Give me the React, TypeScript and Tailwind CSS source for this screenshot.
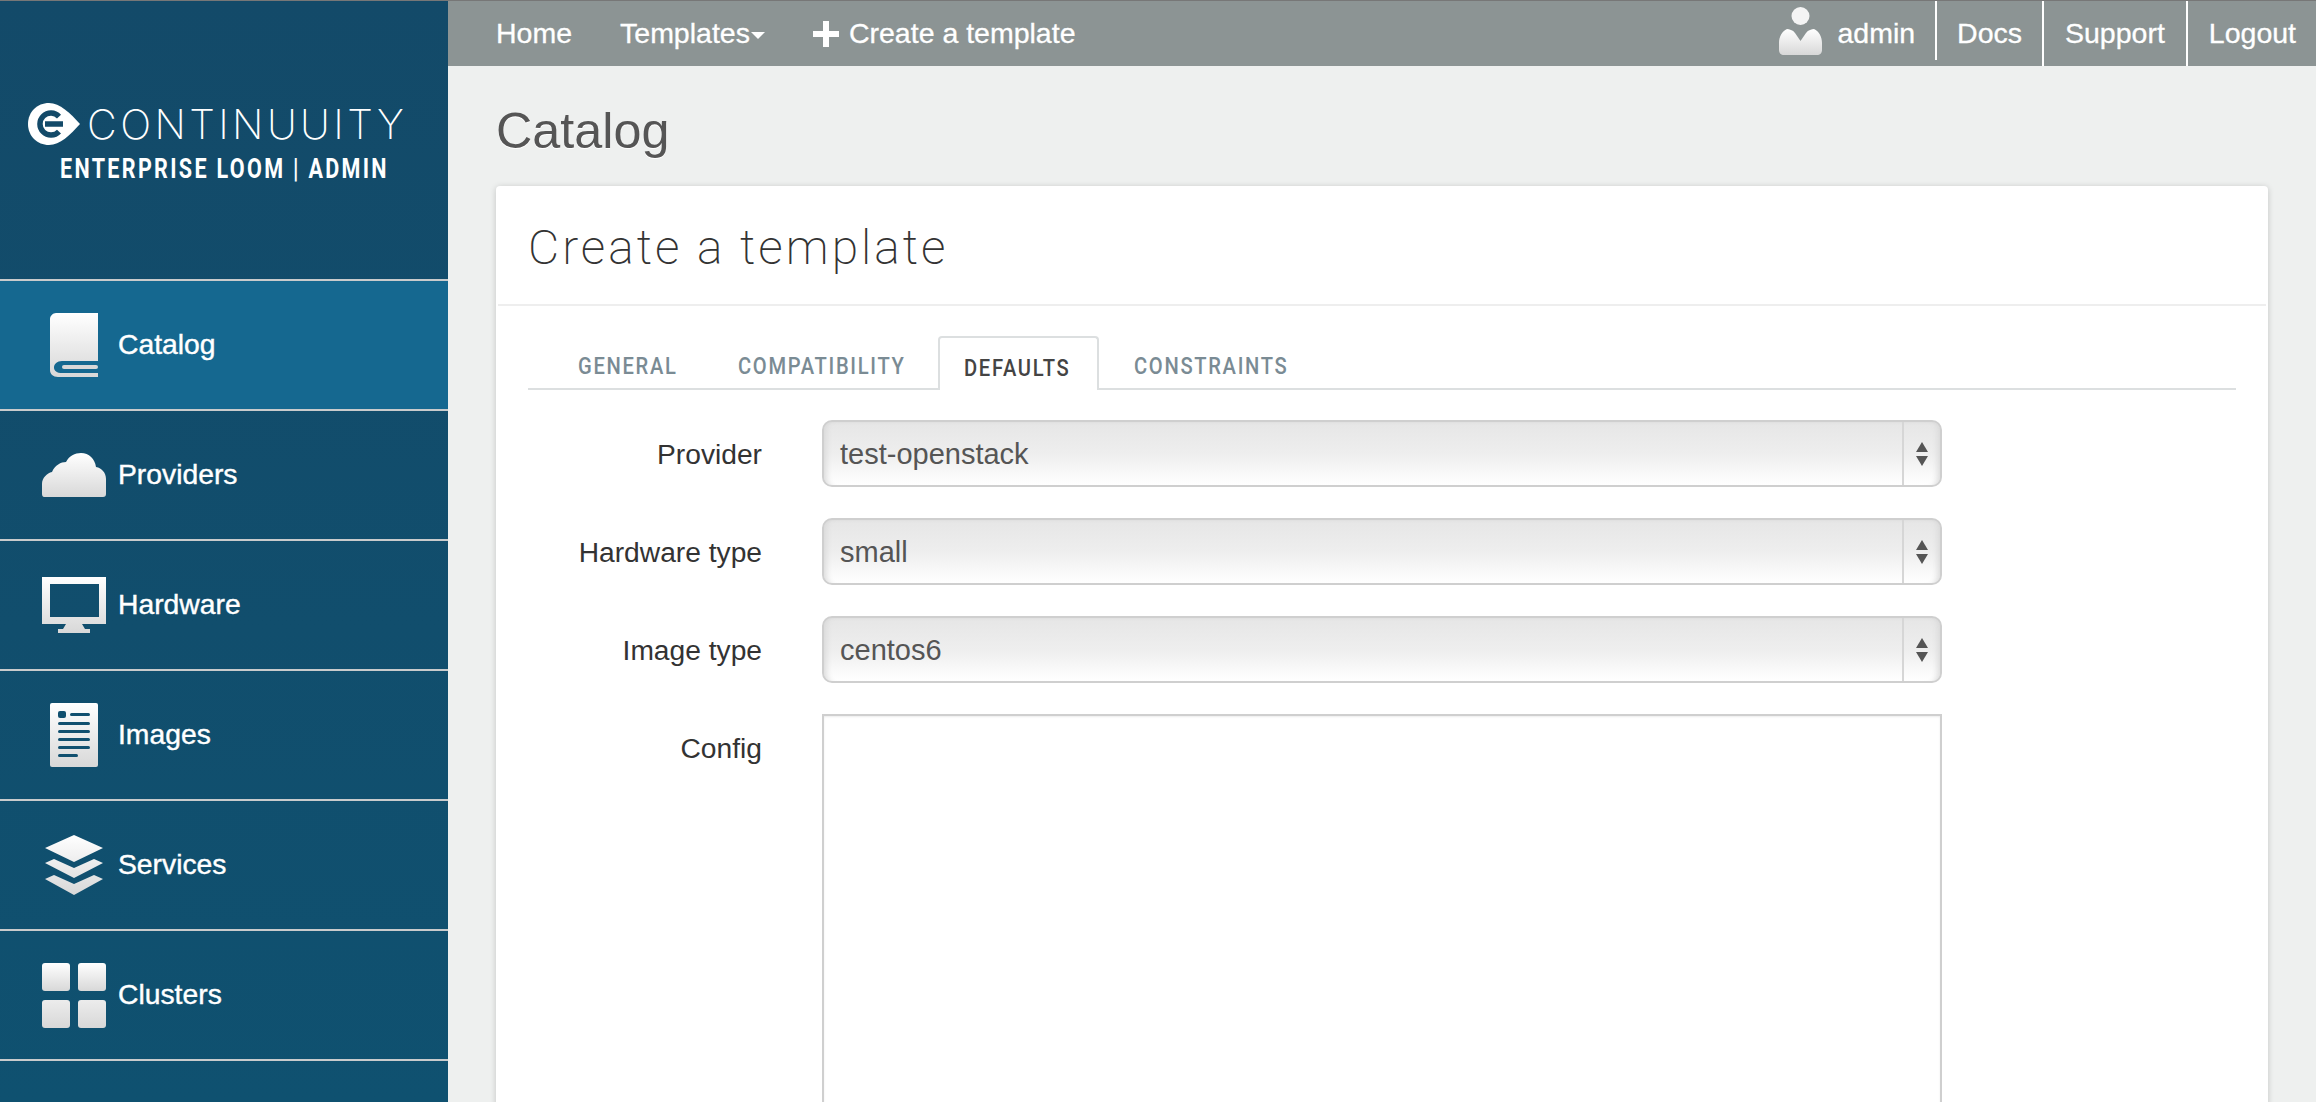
import type { ReactNode } from 'react';

const sans = 'font-["Liberation_Sans",Arial,sans-serif]';

function Grad({ id }: { id: string }) {
  return (
    <defs>
      <linearGradient id={id} x1="0" y1="0" x2="0" y2="1">
        <stop offset="0" stopColor="#ffffff" />
        <stop offset="1" stopColor="#d8d8d8" />
      </linearGradient>
    </defs>
  );
}

function BookIcon() {
  return (
    <svg width="48" height="64" viewBox="0 0 48 64">
      <Grad id="g-book" />
      <path
        d="M6 0H48V48H12C7 48 4 51 4 54.500C4 58 7 60 12 60H48V64H8C3 64 0 61 0 57V6C0 3 3 0 6 0Z"
        fill="url(#g-book)"
      />
      <rect x="12" y="52" width="36" height="4" rx="2" fill="#d8d8d8" />
    </svg>
  );
}

function CloudIcon() {
  return (
    <svg width="64" height="44" viewBox="0 0 64 44">
      <Grad id="g-cloud" />
      <path
        d="M2 44C1 44 0 43 0 41V31C0 25 5 20 10 19C13 12 19 9 24 9C27 3 33 0 39 0C47 0 53 6 54 14C60 15 64 20 64 26V41C64 43 63 44 61 44Z"
        fill="url(#g-cloud)"
      />
    </svg>
  );
}

function MonitorIcon() {
  return (
    <svg width="64" height="56" viewBox="0 0 64 56">
      <Grad id="g-mon" />
      <path
        fillRule="evenodd"
        d="M0 0H64V47H40L43 52H48V56H16V52H21L24 47H0ZM8 7V40H57V7Z"
        fill="url(#g-mon)"
      />
    </svg>
  );
}

function DocIcon() {
  return (
    <svg width="48" height="64" viewBox="0 0 48 64">
      <Grad id="g-doc" />
      <rect width="48" height="64" rx="2" fill="url(#g-doc)" />
      <g fill="#11506f">
        <rect x="8" y="8" width="8" height="7" rx="2" />
        <rect x="20" y="10" width="20" height="3" rx="1.500" />
        <rect x="8" y="19" width="32" height="3" rx="1.500" />
        <rect x="8" y="27" width="32" height="3" rx="1.500" />
        <rect x="8" y="35" width="32" height="3" rx="1.500" />
        <rect x="8" y="43" width="32" height="3" rx="1.500" />
        <rect x="8" y="51" width="20" height="3" rx="1.500" />
      </g>
    </svg>
  );
}

function LayersIcon() {
  return (
    <svg width="58" height="60" viewBox="0 0 58 60">
      <Grad id="g-lay" />
      <path
        d="M29 0L58 13L29 27L0 13ZM9 24L29 33L49 24L58 28L29 43L0 28ZM9 40L29 49L49 40L58 44L29 60L0 44Z"
        fill="url(#g-lay)"
      />
    </svg>
  );
}

function GridIcon() {
  return (
    <svg width="64" height="65" viewBox="0 0 64 65">
      <Grad id="g-grid-top" />
      <defs>
        <linearGradient id="g-grid-bottom" x1="0" y1="0" x2="0" y2="1">
          <stop offset="0" stopColor="#ececec" />
          <stop offset="1" stopColor="#d8d8d8" />
        </linearGradient>
      </defs>
      <rect x="0" y="0" width="28" height="28" rx="3" fill="url(#g-grid-top)" />
      <rect x="36" y="0" width="28" height="28" rx="3" fill="url(#g-grid-top)" />
      <rect x="0" y="37" width="28" height="28" rx="3" fill="url(#g-grid-bottom)" />
      <rect x="36" y="37" width="28" height="28" rx="3" fill="url(#g-grid-bottom)" />
    </svg>
  );
}

function UserIcon() {
  return (
    <svg width="43" height="48" viewBox="0 0 43 48">
      <Grad id="g-user" />
      <ellipse cx="21.500" cy="9" rx="9" ry="9" fill="#f4f4f4" />
      <path
        d="M8 22C10 22 14 23 16 26L21.500 34L27 26C29 23 33 22 35 22C40 24 43 30 43 36V43C43 46 41 48 38 48H5C2 48 0 46 0 43V36C0 30 3 24 8 22Z"
        fill="url(#g-user)"
      />
    </svg>
  );
}

function Logo() {
  return (
    <svg width="52" height="42" viewBox="0 0 52 42" className="shrink-0">
      <path d="M21 0C32 0 42 10 52 21C42 32 32 42 21 42C9 42 0 33 0 21C0 9 9 0 21 0Z" fill="#fff" />
      <path
        d="M31 13.500A11 11 0 1 0 31 28.500M17 21H35"
        fill="none"
        stroke="#134a69"
        strokeWidth="5.500"
      />
    </svg>
  );
}

const sideItems: { label: string; icon: ReactNode; active?: boolean }[] = [
  { label: 'Catalog', icon: <BookIcon />, active: true },
  { label: 'Providers', icon: <CloudIcon /> },
  { label: 'Hardware', icon: <MonitorIcon /> },
  { label: 'Images', icon: <DocIcon /> },
  { label: 'Services', icon: <LayersIcon /> },
  { label: 'Clusters', icon: <GridIcon /> },
];

function Sidebar() {
  return (
    <aside className="flex w-[448px] shrink-0 flex-col bg-gradient-to-b from-[#134a69] to-[#0f5170]">
      <div className="flex h-[278px] flex-col pl-[28px] pt-[102px]">
        <div className="flex h-[42px] items-center gap-[7px]">
          <Logo />
          <span className='font-["Inter",sans-serif] text-[41px] font-extralight leading-none tracking-[3.4px] text-white'>
            CONTINUUITY
          </span>
        </div>
        <div className='ml-[32px] mt-[9px] origin-left scale-x-[0.77] whitespace-nowrap font-["Roboto",sans-serif] text-[28px] font-bold leading-[30px] tracking-[3px] text-white'>
          ENTERPRISE LOOM | ADMIN
        </div>
      </div>
      <nav className="border-t-2 border-[#c9cbcc]">
        {sideItems.map((item) => (
          <div
            key={item.label}
            className={`flex h-[130px] items-center border-b-2 border-[#c9cbcc] ${item.active ? 'bg-[#156890]' : ''}`}
          >
            <div className="flex w-[118px] shrink-0 justify-center pl-[40px] pr-[10px]">{item.icon}</div>
            <span className={`${sans} pb-[2px] text-[28.300px] text-white [-webkit-text-stroke:0.4px_white]`}>{item.label}</span>
          </div>
        ))}
      </nav>
    </aside>
  );
}

function TopNav() {
  return (
    <header className={`${sans} flex h-[65px] shrink-0 items-center justify-between bg-[#8c9494] pl-[24px] text-[28.500px] text-white [-webkit-text-stroke:0.3px_white]`}>
      <div className="flex items-center">
        <a className="px-[24px]">Home</a>
        <a className="flex items-center px-[24px]">
          Templates
          <span className="ml-[1px] mt-[4px] h-0 w-0 border-x-[7px] border-t-[7px] border-x-transparent border-t-white" />
        </a>
        <a className="flex items-center gap-[10px] px-[24px]">
          <svg width="26" height="26" viewBox="0 0 26 26">
            <path d="M10 0H16V10H26V16H16V26H10V16H0V10H10Z" fill="#fff" />
          </svg>
          Create a template
        </a>
      </div>
      <div className="flex h-full items-start">
        <div className="flex h-[59px] items-center gap-[15px] border-r-2 border-white pr-[20px]">
          <UserIcon />
          <span className="mt-[6px]">admin</span>
        </div>
        <a className="flex h-full items-center border-r-2 border-white px-[20px]">Docs</a>
        <a className="flex h-full items-center border-r-2 border-white px-[21px]">Support</a>
        <a className="flex h-full items-center pl-[21px] pr-[20px]">Logout</a>
      </div>
    </header>
  );
}

const tabs = [
  { label: 'GENERAL', w: 'w-[160px]', pl: 'pl-[50px]' },
  { label: 'COMPATIBILITY', w: 'w-[250px]', pl: 'pl-[50px]' },
];

function Tabs() {
  const tabText = 'mt-[8px] origin-left scale-x-[0.84] whitespace-nowrap font-["Roboto",sans-serif] text-[24px] font-medium tracking-[2px]';
  return (
    <div className="flex h-[54px] border-b-2 border-[#dcdfe0]">
      {tabs.map((t) => (
        <div key={t.label} className={`flex items-center ${t.w} ${t.pl} text-[#7a8b94]`}>
          <span className={tabText}>{t.label}</span>
        </div>
      ))}
      <div className="-mb-[2px] flex h-[54px] w-[161px] items-center rounded-t-[4px] border-2 border-b-0 border-[#dcdfe0] bg-white pl-[24px] text-[#444]">
        <span className={tabText}>DEFAULTS</span>
      </div>
      <div className="flex items-center pl-[35px] text-[#7a8b94]">
        <span className={tabText}>CONSTRAINTS</span>
      </div>
    </div>
  );
}

function SelectRow({ label, value }: { label: string; value: string }) {
  return (
    <div className="flex h-[67px] items-center">
      <label className="w-[234px] pt-[2px] text-right text-[#333]">{label}</label>
      <div className="ml-[60px] flex h-full w-[1120px] items-stretch rounded-[10px] border-2 border-[#cfcfcf] bg-gradient-to-b from-[#e6e6e6] via-[#eeeeee] to-[#ffffff] shadow-[inset_8px_0_6px_-6px_#d8d8d8,inset_-8px_0_6px_-6px_#d8d8d8,inset_0_3px_3px_-3px_#d8d8d8]">
        <div className="flex flex-1 items-center pl-[16px] pt-[2px] text-[29px] text-[#555]">{value}</div>
        <div className="flex w-[38px] flex-col items-center justify-center gap-[4px] border-l-2 border-[#d6d6d6]">
          <span className="h-0 w-0 border-x-[6px] border-b-[10px] border-x-transparent border-b-[#555]" />
          <span className="h-0 w-0 border-x-[6px] border-t-[10px] border-x-transparent border-t-[#555]" />
        </div>
      </div>
    </div>
  );
}

export default function App() {
  return (
    <div className="flex h-[1102px] w-full flex-col overflow-hidden bg-[#eef0ef]">
      <div className="h-[1px] shrink-0 bg-[#777]" />
      <div className="flex min-h-0 flex-1">
        <Sidebar />
        <main className="flex min-w-0 flex-1 flex-col">
          <TopNav />
          <div className="min-h-0 flex-1 px-[48px]">
            <h1 className={`${sans} mt-[35px] text-[50.300px] leading-[60px] text-[#555] [text-shadow:0_1px_0_#fff]`}>
              Catalog
            </h1>
            <section className="mt-[25px] h-[1000px] rounded-[4px] bg-white shadow-[0_1px_6px_rgba(0,0,0,0.18)]">
              <div className="mx-[2px] flex h-[120px] items-center border-b-2 border-[#eeeeee] pl-[30px] pt-[6px] font-['Roboto',sans-serif] text-[48px] font-extralight tracking-[3px] text-[#333]">
                Create a template
              </div>
              <div className={`${sans} px-[32px] pt-[30px] text-[28.200px]`}>
                <Tabs />
                <div className="mt-[30px] flex w-[1414px] flex-col gap-[31px]">
                  <SelectRow label="Provider" value="test-openstack" />
                  <SelectRow label="Hardware type" value="small" />
                  <SelectRow label="Image type" value="centos6" />
                  <div className="flex">
                    <label className="w-[234px] pt-[13px] text-right text-[#333]">Config</label>
                    <textarea
                      readOnly
                      className="ml-[60px] h-[500px] w-[1120px] resize-none border-2 border-[#cfcfcf] bg-white shadow-[inset_0_1px_2px_rgba(0,0,0,0.08)] outline-none"
                    />
                  </div>
                </div>
              </div>
            </section>
          </div>
        </main>
      </div>
    </div>
  );
}
